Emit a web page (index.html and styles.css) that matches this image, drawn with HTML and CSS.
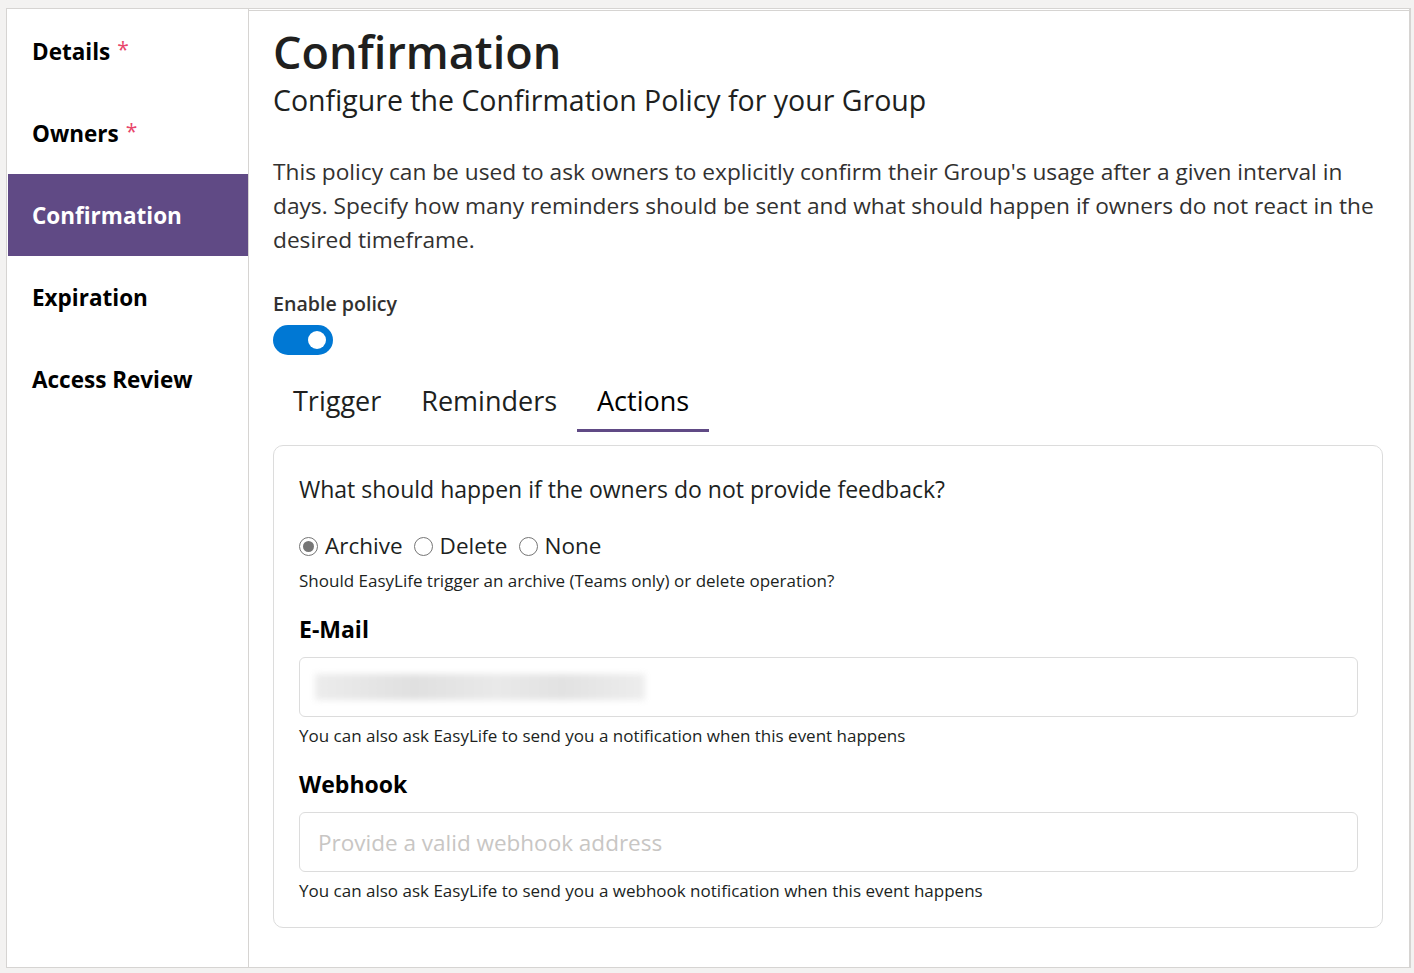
FILE: index.html
```html
<!DOCTYPE html>
<html lang="en">
<head>
<meta charset="utf-8">
<title>Confirmation</title>
<link rel="stylesheet" href="styles.css">
</head>
<body>
<div class="frame">
  <nav class="sidebar">
    <a class="nav-item">Details <span class="req">*</span></a>
    <a class="nav-item">Owners <span class="req">*</span></a>
    <a class="nav-item active">Confirmation</a>
    <a class="nav-item">Expiration</a>
    <a class="nav-item">Access Review</a>
  </nav>
  <main class="main">
    <h1 class="title">Confirmation</h1>
    <h2 class="subtitle">Configure the Confirmation Policy for your Group</h2>
    <p class="intro">This policy can be used to ask owners to explicitly confirm their Group's usage after a given interval in days. Specify how many reminders should be sent and what should happen if owners do not react in the desired timeframe.</p>
    <div class="field-label">Enable policy</div>
    <div class="toggle"><span class="knob"></span></div>
    <div class="tabs">
      <div class="tab">Trigger</div>
      <div class="tab">Reminders</div>
      <div class="tab active">Actions</div>
    </div>
    <section class="card">
      <div class="question">What should happen if the owners do not provide feedback?</div>
      <div class="radios">
        <label class="radio"><span class="dot checked"></span>Archive</label>
        <label class="radio"><span class="dot"></span>Delete</label>
        <label class="radio"><span class="dot"></span>None</label>
      </div>
      <div class="help help-radio">Should EasyLife trigger an archive (Teams only) or delete operation?</div>
      <div class="section-label">E-Mail</div>
      <div class="input"><span class="blurred"></span></div>
      <div class="help">You can also ask EasyLife to send you a notification when this event happens</div>
      <div class="section-label">Webhook</div>
      <div class="input"><span class="placeholder">Provide a valid webhook address</span></div>
      <div class="help">You can also ask EasyLife to send you a webhook notification when this event happens</div>
    </section>
  </main>
</div>
</body>
</html>
```
FILE: styles.css
```css
html, body {
  margin: 0;
  padding: 0;
  background: #f3f2f1;
}
body {
  font-family: "Open Sans", "Noto Sans", sans-serif;
  color: #201f1e;
  padding: 8px 4px 5px 6px;
}
.frame {
  display: flex;
  width: 1402px;
  height: 958px;
  border: 1px solid #d6d4d2;
  border-right-width: 2px;
  background: #fff;
}
.sidebar {
  width: 240px;
  flex: none;
  padding-top: 1px;
  padding-left: 1px;
  display: flex;
  flex-direction: column;
  border-right: 1px solid #d6d4d2;
}
.nav-item {
  height: 82px;
  display: flex;
  align-items: center;
  padding-left: 24px;
  font-size: 22.5px;
  font-weight: 700;
  color: #000;
  box-sizing: border-box;
}
.nav-item .req {
  color: #e8466b;
  font-weight: 400;
  font-size: 21px;
  margin-left: 7px;
  margin-top: -5px;
}
.nav-item.active {
  background: #604a85;
  color: #fff;
}
.main {
  flex: 1;
  border-top: 1px solid #d6d4d2;
  margin-top: 1px;
  padding: 0 26px 0 24px;
}
.title {
  margin: 16px 0 0;
  font-size: 45px;
  font-weight: 600;
  line-height: 50px;
  color: #201f1e;
}
.subtitle {
  margin: 4px 0 0;
  font-size: 28.5px;
  font-weight: 400;
  line-height: 38px;
  color: #201f1e;
}
.intro {
  margin: 36px 0 0;
  font-size: 22.7px;
  line-height: 34px;
  color: #323130;
}
.field-label {
  margin-top: 33px;
  font-size: 19.6px;
  font-weight: 600;
  line-height: 28px;
  color: #323130;
}
.toggle {
  margin-top: 7px;
  width: 60px;
  height: 30px;
  border-radius: 15px;
  background: #0078d4;
  position: relative;
}
.knob {
  position: absolute;
  right: 7px;
  top: 6px;
  width: 18px;
  height: 18px;
  border-radius: 50%;
  background: #fff;
}
.tabs {
  display: flex;
  margin-top: 21px;
}
.tab {
  padding: 6px 20px 9px;
  font-size: 27px;
  line-height: 38px;
  color: #201f1e;
  border-bottom: 3px solid transparent;
}
.tab.active {
  border-bottom-color: #604a85;
  color: #000;
}
.card {
  margin-top: 13px;
  border: 1px solid #dcdcdc;
  border-radius: 10px;
  padding: 25px 24px 24px 25px;
}
.question {
  font-size: 23px;
  line-height: 36px;
  color: #201f1e;
}
.radios {
  display: flex;
  gap: 11px;
  margin-top: 24px;
}
.radio {
  display: flex;
  align-items: center;
  font-size: 22.5px;
  line-height: 30px;
  color: #201f1e;
}
.dot {
  width: 19px;
  height: 19px;
  border: 1px solid #767676;
  border-radius: 50%;
  margin-right: 7px;
  box-sizing: border-box;
  position: relative;
  background: #fff;
}
.dot.checked::after {
  content: "";
  position: absolute;
  left: 3px;
  top: 3px;
  width: 11px;
  height: 11px;
  border-radius: 50%;
  background: #767676;
}
.help {
  font-size: 17px;
  line-height: 24px;
  color: #201f1e;
  margin-top: 7px;
}
.help.help-radio {
  margin-top: 8px;
}
.section-label {
  margin-top: 21px;
  font-size: 23px;
  font-weight: 700;
  line-height: 30px;
  color: #000;
}
.input {
  margin-top: 13px;
  height: 58px;
  border: 1px solid #dcdcdc;
  border-radius: 6px;
  display: flex;
  align-items: center;
  padding-left: 18px;
}
.blurred {
  width: 330px;
  height: 26px;
  background: linear-gradient(90deg, #ececec, #e0e0e0 30%, #e9e9e9 55%, #e2e2e2 75%, #ededed);
  filter: blur(3px);
  margin-left: -3px;
}
.placeholder {
  font-size: 22.5px;
  color: #c8c6c4;
}
```
